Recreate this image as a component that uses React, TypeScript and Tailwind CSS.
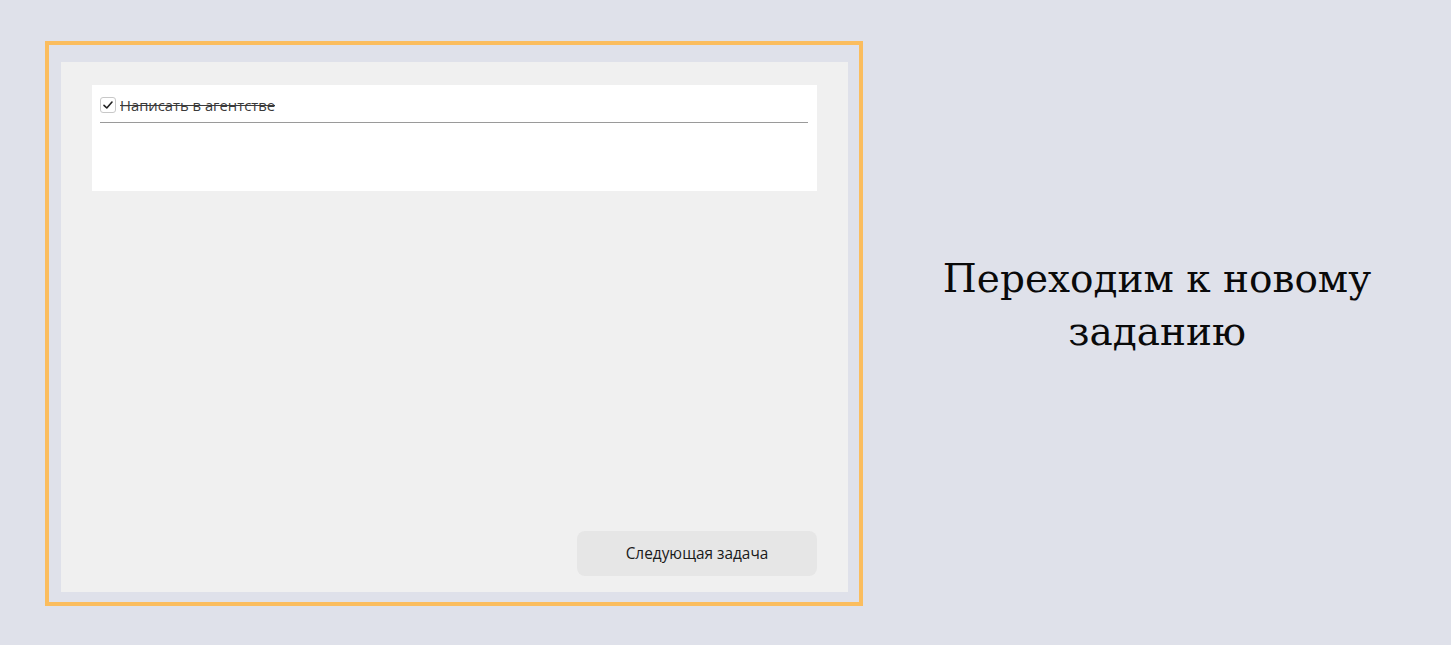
import React from "react";

export default function App() {
  return (
    <div className="w-[1451px] h-[645px] bg-[#dfe1ea] flex overflow-hidden">
      <div className="ml-[45px] mt-[41px] w-[818px] h-[565px] border-4 border-[#fbbd5e] pl-[12px] pr-[11px] pt-[17px] pb-[10px]">
        <div className="w-full h-full bg-[#f0f0f0] pl-[31px] pr-[31px] pt-[23px] pb-[16px] flex flex-col" style={{ fontFamily: '"Open Sans", "Noto Sans", sans-serif' }}>
          <div className="h-[106px] bg-white pl-[8px] pr-[9px] pt-[12px]">
            <div className="flex items-center gap-[4px] h-[16px]">
              <div className="w-[16px] h-[16px] border border-[#c8c8c8] rounded-[3px] bg-white flex items-center justify-center">
                <svg width="12" height="12" viewBox="0 0 12 12" fill="none">
                  <path d="M2 6.3 L4.8 9 L10 3" stroke="#222" strokeWidth="1.6" strokeLinecap="round" strokeLinejoin="round" />
                </svg>
              </div>
              <span className="text-[14.8px] text-[#3a3a3a] line-through leading-none">Написать в агентстве</span>
            </div>
            <div className="mt-[9px] h-px bg-[#9a9a9a]" />
          </div>
          <div className="flex-1" />
          <div className="flex justify-end">
            <button className="w-[240px] h-[45px] bg-[#e6e6e6] rounded-[8px] text-[15.4px] text-[#1a1a1a]">Следующая задача</button>
          </div>
        </div>
      </div>
      <div className="flex-1 flex items-start justify-center pt-[252px]">
        <div className="text-center text-[39px] leading-[53px] text-[#0a0a0a]" style={{ fontFamily: '"DejaVu Serif", "Liberation Serif", serif' }}>
          Переходим к новому
          <br />
          заданию
        </div>
      </div>
    </div>
  );
}
